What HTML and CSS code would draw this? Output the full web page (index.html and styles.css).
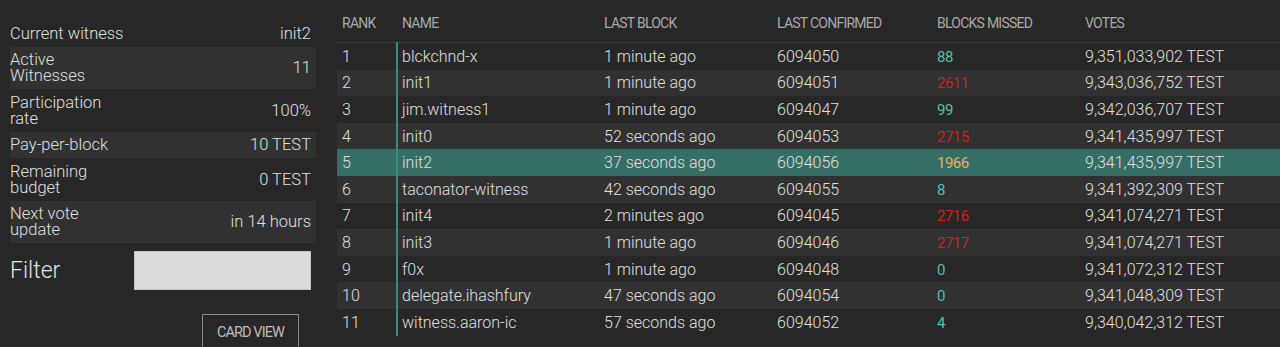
FILE: index.html
```html
<!DOCTYPE html>
<html>
<head>
<meta charset="utf-8">
<link rel="stylesheet" href="styles.css">
</head>
<body>
<div class="page">
  <aside class="side">
    <div class="stats">
      <div class="stat"><span class="lbl">Current witness</span><span class="val">init2</span></div>
      <div class="stat alt"><span class="lbl">Active Witnesses</span><span class="val">11</span></div>
      <div class="stat"><span class="lbl">Participation rate</span><span class="val">100%</span></div>
      <div class="stat alt"><span class="lbl">Pay-per-block</span><span class="val">10 TEST</span></div>
      <div class="stat"><span class="lbl">Remaining budget</span><span class="val">0 TEST</span></div>
      <div class="stat alt"><span class="lbl">Next vote update</span><span class="val">in 14 hours</span></div>
    </div>
    <div class="filter">
      <span class="filter-lbl">Filter</span>
      <input class="filter-input" type="text">
    </div>
    <div class="actions">
      <button class="btn">CARD VIEW</button>
    </div>
  </aside>
  <main class="main">
    <table class="tbl">
      <colgroup>
        <col class="c-rank"><col class="c-name"><col class="c-last"><col class="c-conf"><col class="c-miss"><col class="c-votes">
      </colgroup>
      <thead>
        <tr><th>RANK</th><th>NAME</th><th>LAST BLOCK</th><th>LAST CONFIRMED</th><th>BLOCKS MISSED</th><th>VOTES</th></tr>
      </thead>
      <tbody>
        <tr><td>1</td><td class="nm">blckchnd-x</td><td>1 minute ago</td><td>6094050</td><td class="ok">88</td><td>9,351,033,902 TEST</td></tr>
        <tr><td>2</td><td class="nm">init1</td><td>1 minute ago</td><td>6094051</td><td class="bad">2611</td><td>9,343,036,752 TEST</td></tr>
        <tr><td>3</td><td class="nm">jim.witness1</td><td>1 minute ago</td><td>6094047</td><td class="ok">99</td><td>9,342,036,707 TEST</td></tr>
        <tr><td>4</td><td class="nm">init0</td><td>52 seconds ago</td><td>6094053</td><td class="bad">2715</td><td>9,341,435,997 TEST</td></tr>
        <tr class="cur"><td>5</td><td class="nm">init2</td><td>37 seconds ago</td><td>6094056</td><td class="warn">1966</td><td>9,341,435,997 TEST</td></tr>
        <tr><td>6</td><td class="nm">taconator-witness</td><td>42 seconds ago</td><td>6094055</td><td class="ok">8</td><td>9,341,392,309 TEST</td></tr>
        <tr><td>7</td><td class="nm">init4</td><td>2 minutes ago</td><td>6094045</td><td class="bad">2716</td><td>9,341,074,271 TEST</td></tr>
        <tr><td>8</td><td class="nm">init3</td><td>1 minute ago</td><td>6094046</td><td class="bad">2717</td><td>9,341,074,271 TEST</td></tr>
        <tr><td>9</td><td class="nm">f0x</td><td>1 minute ago</td><td>6094048</td><td class="ok">0</td><td>9,341,072,312 TEST</td></tr>
        <tr><td>10</td><td class="nm">delegate.ihashfury</td><td>47 seconds ago</td><td>6094054</td><td class="ok">0</td><td>9,341,048,309 TEST</td></tr>
        <tr><td>11</td><td class="nm">witness.aaron-ic</td><td>57 seconds ago</td><td>6094052</td><td class="ok">4</td><td>9,340,042,312 TEST</td></tr>
      </tbody>
    </table>
  </main>
</div>
</body>
</html>
```

FILE: styles.css
```css
html, body {
  margin: 0;
  padding: 0;
  background: #272727;
  color: #e0e0e0;
  font-family: Roboto, "Liberation Sans", sans-serif;
  font-weight: 300;
  overflow: hidden;
}

.page {
  display: flex;
  align-items: flex-start;
  height: 347px;
}

.side {
  width: 306px;
  margin-left: 10px;
  padding-top: 20px;
  flex: none;
}

.stat {
  display: flex;
  justify-content: space-between;
  align-items: center;
  padding: 5.5px 5px 5px 0;
  font-size: 16.5px;
  line-height: 16px;
}

.stat.alt {
  background: #313131;
}

.lbl {
  width: 116px;
}

.val {
  text-align: right;
}

.filter {
  display: flex;
  align-items: center;
  justify-content: space-between;
  margin-top: 8px;
  padding-right: 5px;
}

.filter-lbl {
  font-size: 23px;
  color: #e4e4e4;
}

.filter-input {
  width: 177px;
  height: 39px;
  box-sizing: border-box;
  background: #dcdcdc;
  border: 1px solid #c2c2c2;
  margin: 0;
}

.actions {
  display: flex;
  justify-content: flex-end;
  padding-right: 17px;
  margin-top: 24px;
}

.btn {
  width: 97px;
  height: 38px;
  background: transparent;
  border: 1px solid #8a8a8a;
  color: #bdbdbd;
  font-family: Roboto, "Liberation Sans", sans-serif;
  font-weight: 400;
  font-size: 14.5px;
  letter-spacing: -0.9px;
  padding: 0 0 2px;
}

.main {
  margin-left: 21px;
  flex: 1;
}

.tbl {
  width: 943px;
  border-collapse: collapse;
  table-layout: fixed;
}

.c-rank { width: 60px; }
.c-name { width: 202px; }
.c-last { width: 173px; }
.c-conf { width: 160px; }
.c-miss { width: 148px; }
.c-votes { width: 200px; }

.tbl th {
  text-align: left;
  font-weight: 400;
  font-size: 14px;
  letter-spacing: -0.75px;
  color: #a9a9a9;
  height: 39px;
  padding: 3px 0 0 5px;
  border-bottom: 1px solid #3a3a3a;
  vertical-align: middle;
}

.tbl td {
  height: 25.6px;
  padding: 1px 0 0 5px;
  font-size: 16px;
  line-height: 16px;
  color: #e0e0e0;
  white-space: nowrap;
}

.tbl td.nm {
  border-left: 2px solid #3d8a7d;
  padding-left: 4px;
}

.tbl tbody tr:nth-child(even) {
  background: #313131;
}

.tbl tbody tr.cur {
  background: #356e65;
}

.tbl td.ok,
.tbl td.bad,
.tbl td.warn {
  font-weight: 400;
  font-size: 15px;
  letter-spacing: -0.5px;
}

.tbl td.ok { color: #4cc5ad; }
.tbl td.bad { color: #d21f1f; }
.tbl td.warn { color: #e9b44e; }
```
